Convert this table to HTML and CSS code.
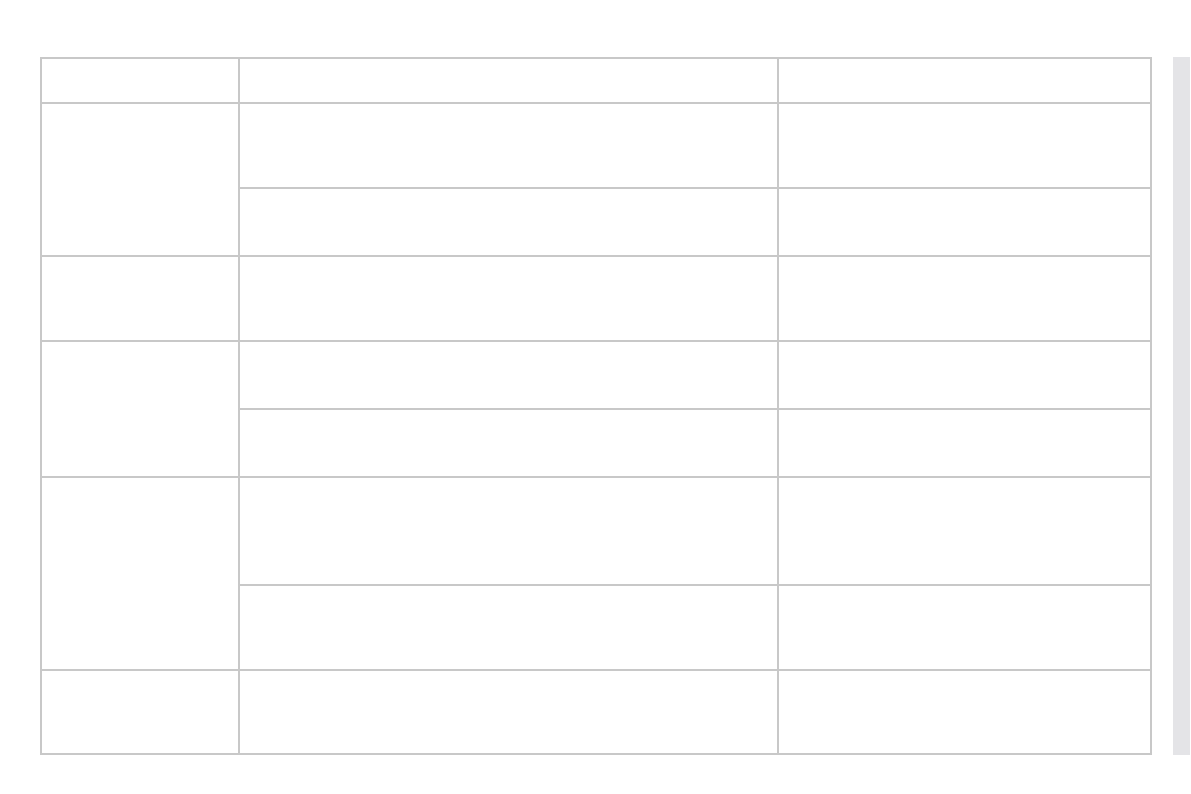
FILE: index.html
```html
<!DOCTYPE html>
<html lang="en">
<head>
<meta charset="utf-8">
<title>Table</title>
<link rel="stylesheet" href="styles.css">
</head>
<body>
<div class="page">
  <table class="grid">
    <colgroup>
      <col class="c1"><col class="c2"><col class="c3">
    </colgroup>
    <thead>
      <tr class="h43"><th></th><th></th><th></th></tr>
    </thead>
    <tbody>
      <tr class="h83"><td rowspan="2"></td><td></td><td></td></tr>
      <tr class="h66"><td></td><td></td></tr>
      <tr class="h83"><td></td><td></td><td></td></tr>
      <tr class="h66"><td rowspan="2"></td><td></td><td></td></tr>
      <tr class="h66"><td></td><td></td></tr>
      <tr class="h106"><td rowspan="2"></td><td></td><td></td></tr>
      <tr class="h83"><td></td><td></td></tr>
      <tr class="h82"><td></td><td></td><td></td></tr>
    </tbody>
  </table>
  <div class="track"></div>
</div>
</body>
</html>
```
FILE: styles.css
```css
html, body {
  margin: 0;
  padding: 0;
  background: #ffffff;
  font-family: "Liberation Sans", Arial, sans-serif;
}
.page {
  display: flex;
  align-items: flex-start;
  gap: 21px;
  padding: 57px 0 0 40px;
}
.grid {
  table-layout: fixed;
  width: 1112px;
  border-collapse: separate;
  border-spacing: 2px;
  background: #c8c8c8;
}
.grid .c1 { width: 196px; }
.grid .c2 { width: 537px; }
.grid .c3 { width: 371px; }
.grid th,
.grid td {
  background: #ffffff;
  padding: 0;
}
.h43 { height: 43px; }
.h66 { height: 66px; }
.h82 { height: 82px; }
.h83 { height: 83px; }
.h106 { height: 106px; }
.track {
  width: 17px;
  height: 698px;
  background: #e4e4e7;
}
```
